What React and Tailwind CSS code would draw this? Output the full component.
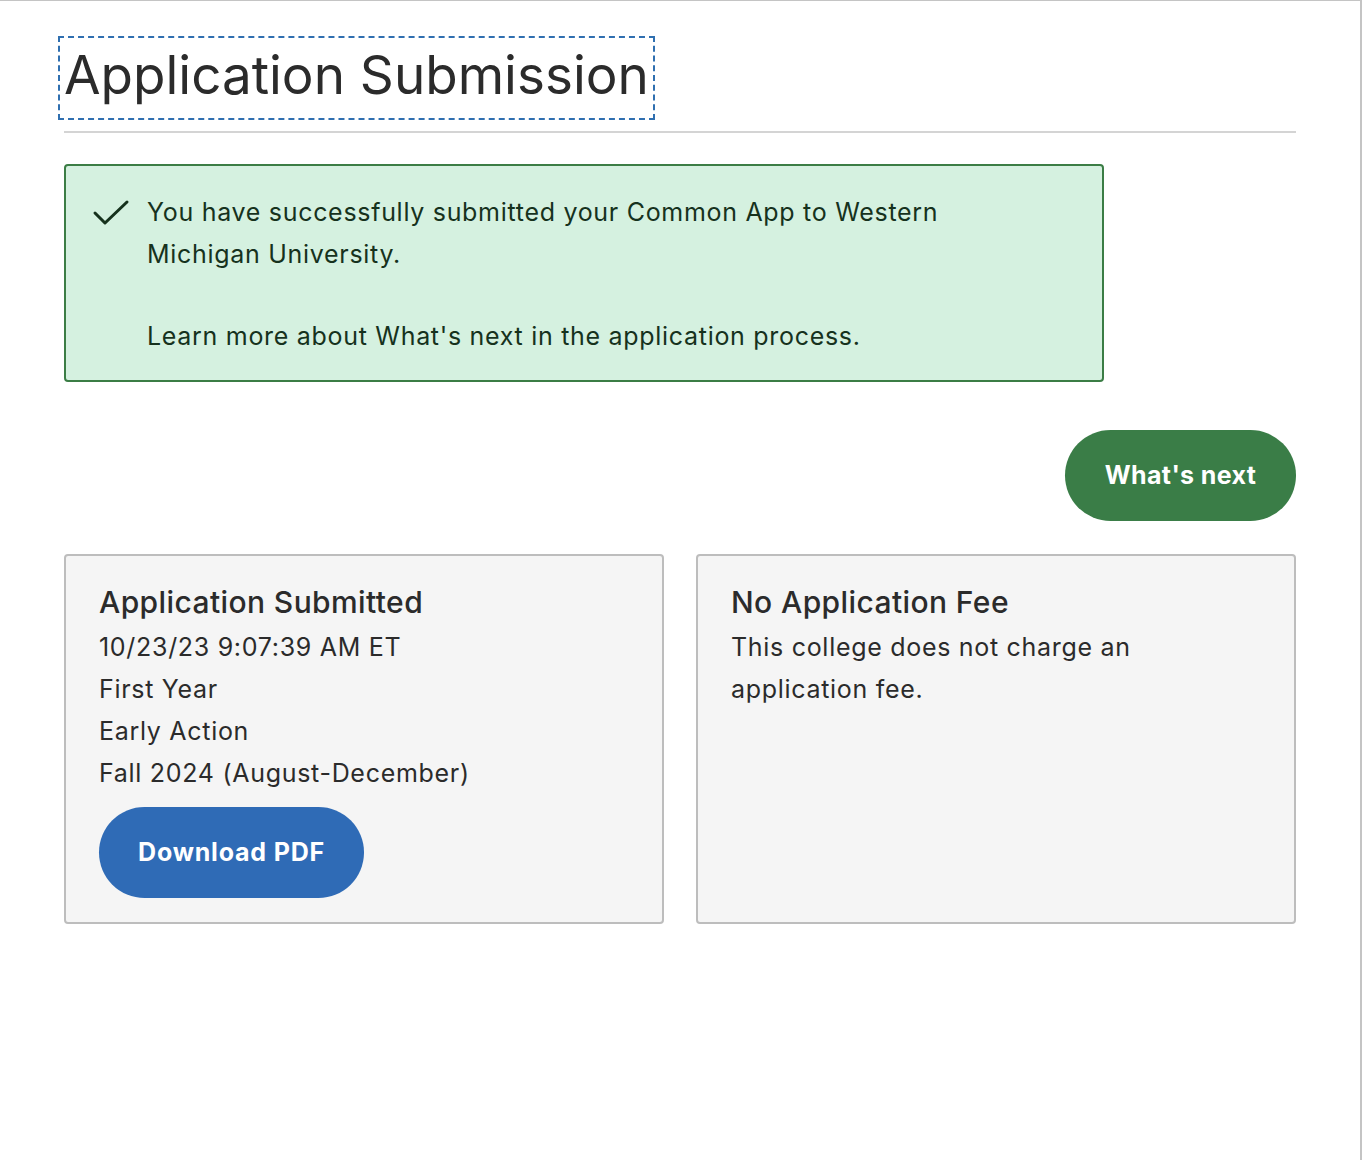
export default function App() {
  const font = { fontFamily: 'Inter, "Noto Sans", sans-serif' };
  return (
    <div style={font} className="w-[1362px] h-[1160px] bg-white border-t border-r-2 border-[#c4c4c4] text-[#2b2b2b]">
      <div className="pl-[64px] pr-[64px] pt-[35px]">
        <h1 className="inline-block -ml-[6px] px-[4px] pb-[10px] pt-[4px] border-2 border-dashed border-[#2f6fb0] text-[53px] leading-[66px] font-normal">
          Application Submission
        </h1>
        <div className="mt-[11px] h-[2px] bg-[#d4d4d4]" />

        <div className="mt-[31px] w-[1040px] bg-[#d5f1e0] border-2 border-[#3b7d45] rounded-[4px] pl-[26px] pr-[20px] pt-[25px] pb-[23px] flex text-[#16321d]">
          <svg width="38" height="28" viewBox="0 0 38 28" className="mt-[8px] shrink-0">
            <path d="M3 14 L13 24 L35 3" fill="none" stroke="#16321d" strokeWidth="3" strokeLinecap="round" strokeLinejoin="round" />
          </svg>
          <div className="ml-[17px] text-[25px] leading-[42px] tracking-[0.7px]">
            <p>You have successfully submitted your Common App to Western<br />Michigan University.</p>
            <p className="mt-[40px]">Learn more about What's next in the application process.</p>
          </div>
        </div>

        <div className="mt-[48px] flex justify-end">
          <button className="h-[91px] w-[231px] rounded-full bg-[#3a7d47] text-white text-[25px] font-bold tracking-[0.4px]">What's next</button>
        </div>

        <div className="mt-[33px] grid grid-cols-2 gap-[32px]">
          <div className="h-[370px] bg-[#f5f5f5] border-2 border-[#bdbdbd] rounded-[4px] px-[33px] pt-[25px]">
            <h2 className="text-[30px] leading-[42px] font-medium tracking-[0.4px] mb-[3px]">Application Submitted</h2>
            <div className="text-[25px] leading-[42px] tracking-[0.7px]">
              <p>10/23/23 9:07:39 AM ET</p>
              <p>First Year</p>
              <p>Early Action</p>
              <p>Fall 2024 (August-December)</p>
            </div>
            <button className="mt-[13px] h-[91px] w-[265px] rounded-full bg-[#2f6bb6] text-white text-[25px] font-bold tracking-[0.8px]">Download PDF</button>
          </div>
          <div className="h-[370px] bg-[#f5f5f5] border-2 border-[#bdbdbd] rounded-[4px] px-[33px] pt-[25px]">
            <h2 className="text-[30px] leading-[42px] font-medium tracking-[0.4px] mb-[3px]">No Application Fee</h2>
            <p className="text-[25px] leading-[42px] tracking-[0.7px]">This college does not charge an<br />application fee.</p>
          </div>
        </div>
      </div>
    </div>
  );
}
